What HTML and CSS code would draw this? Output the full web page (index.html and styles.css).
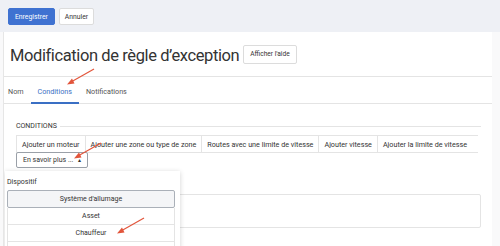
FILE: index.html
```html
<html>
<head>
  <title>Modification de règle d'exception</title>
  <link rel="stylesheet" href="styles.css">
</head>
<body>
<div class="toolbar">
  <button class="btn btn-primary">Enregistrer</button>
  <button class="btn">Annuler</button>
</div>
<div class="page">
  <div class="header">
    <h1>Modification de règle d’exception</h1>
    <button class="btn btn-help">Afficher l'aide</button>
  </div>
  <nav class="tabs">
    <a class="tab">Nom</a>
    <a class="tab active">Conditions</a>
    <a class="tab">Notifications</a>
  </nav>
  <section class="content">
    <div class="legend"><span>CONDITIONS</span></div>
    <div class="cond-row">
      <button>Ajouter un moteur</button>
      <button>Ajouter une zone ou type de zone</button>
      <button>Routes avec une limite de vitesse</button>
      <button>Ajouter vitesse</button>
      <button>Ajouter la limite de vitesse</button>
    </div>
    <div class="more-wrap">
      <button class="more">En savoir plus ... <span class="caret">&#9652;</span></button>
    </div>
    <div class="box"></div>
  </section>

  <div class="dropdown">
    <div class="dropdown-title">Dispositif</div>
    <ul class="list">
      <li class="first">Système d'allumage</li>
      <li>Asset</li>
      <li>Chauffeur</li>
      <li></li>
    </ul>
  </div>

  <!-- red pointers from the annotated screenshot -->
  <svg class="arrow arrow-tab" width="30" height="18" viewBox="0 0 30 18">
    <line x1="28" y1="1" x2="5" y2="14" stroke="#e2553b" stroke-width="1.2"/>
    <polygon points="1,16.5 6,10.5 8.5,15.5" fill="#e2553b"/>
  </svg>
  <svg class="arrow arrow-more" width="30" height="18" viewBox="0 0 30 18">
    <line x1="28" y1="1" x2="5" y2="14" stroke="#e2553b" stroke-width="1.2"/>
    <polygon points="1,16.5 6,10.5 8.5,15.5" fill="#e2553b"/>
  </svg>
  <svg class="arrow arrow-item" width="30" height="18" viewBox="0 0 30 18">
    <line x1="28" y1="1" x2="5" y2="14" stroke="#e2553b" stroke-width="1.2"/>
    <polygon points="1,16.5 6,10.5 8.5,15.5" fill="#e2553b"/>
  </svg>
</div>
</body>
</html>
```

FILE: styles.css
```css
body {
  margin: 0;
  background: #f9f9fa;
  color: #333;
  font-family: Roboto, "Liberation Sans", sans-serif;
}
.toolbar {
  height: 32px;
  background: #eef0f5;
  display: flex;
  align-items: flex-start;
  gap: 4px;
  padding: 8px 0 0 8px;
  box-sizing: border-box;
}
.btn {
  font-family: inherit;
  font-size: 6.8px;
  height: 17px;
  padding: 0 5px;
  border: 1px solid #dcdcdc;
  border-radius: 2px;
  background: #fff;
  color: #333;
}
.btn-primary {
  background: #3f72d1;
  border-color: #3f72d1;
  color: #fff;
  padding: 0 6px;
}
.page {
  position: relative;
  margin-left: 3px;
  width: 488px;
  height: 214px;
  background: #fff;
  border-left: 1px solid #e6e6e6;
  overflow: hidden;
}
.header {
  display: flex;
  align-items: center;
  gap: 4px;
  height: 44px;
  padding-left: 6px;
  border-bottom: 1px solid #e4e4e4;
}
.header h1 {
  margin: 3px 0 0;
  font-size: 16.5px;
  font-weight: 400;
  color: #333;
  letter-spacing: -0.4px;
}
.btn-help {
  height: 19px;
  padding: 0 6px;
  font-size: 6.6px;
}
.tabs {
  display: flex;
  height: 26px;
  border-bottom: 1px solid #e4e4e4;
}
.tab {
  font-size: 7.2px;
  color: #555;
  padding: 4px 7px 0;
  display: flex;
  align-items: center;
  border-bottom: 2px solid transparent;
  margin-bottom: -1px;
}
.tab:first-child {
  padding-left: 4px;
}
.tab.active {
  color: #3a6fc4;
  border-bottom-color: #3a6fc4;
}
.content {
  padding: 16px 11px 0 12px;
}
.legend {
  display: flex;
  align-items: center;
  gap: 3px;
  font-size: 7px;
  color: #333;
  height: 12px;
}
.legend::after {
  content: "";
  flex: 1;
  border-top: 1px solid #e4e4e4;
}
.cond-row {
  display: flex;
  margin-top: 3px;
  margin-right: 3px;
  border-top: 1px solid #e4e4e4;
  border-bottom: 1px solid #e4e4e4;
}
.cond-row button {
  font-family: inherit;
  font-size: 7.2px;
  color: #333;
  background: #fff;
  border: 0;
  border-left: 1px solid #e4e4e4;
  height: 16px;
  padding: 0 5px;
  white-space: nowrap;
}
.more-wrap {
  display: flex;
  margin-top: -1px;
}
.more {
  font-family: inherit;
  font-size: 7px;
  color: #333;
  background: #fff;
  height: 16px;
  padding: 0 6px;
  border: 1px solid #9aa0a8;
  border-radius: 2px;
}
.caret {
  font-size: 6px;
  margin-left: 3px;
}
.box {
  margin-top: 26px;
  height: 32px;
  border: 1px solid #e4e4e4;
  border-radius: 2px;
}
.dropdown {
  position: absolute;
  left: 1px;
  top: 139px;
  width: 175px;
  height: 90px;
  background: #fff;
  box-shadow: 0 1px 5px rgba(0, 0, 0, 0.18);
  padding: 7px 5px 0 2px;
  box-sizing: border-box;
}
.dropdown-title {
  font-size: 7px;
  color: #333;
  margin-bottom: 4px;
}
.list {
  list-style: none;
  margin: 0;
  padding: 0;
}
.list li {
  height: 16px;
  line-height: 16px;
  text-align: center;
  font-size: 7px;
  color: #333;
  border: 1px solid #e4e4e4;
  border-top: 0;
}
.list li.first {
  border: 1px solid #aab0b8;
  border-radius: 2px;
  background: #f4f5f7;
}
.arrow {
  position: absolute;
}
.arrow-tab {
  left: 62px;
  top: 36px;
}
.arrow-more {
  left: 69px;
  top: 110px;
}
.arrow-item {
  left: 112px;
  top: 185px;
}
```
